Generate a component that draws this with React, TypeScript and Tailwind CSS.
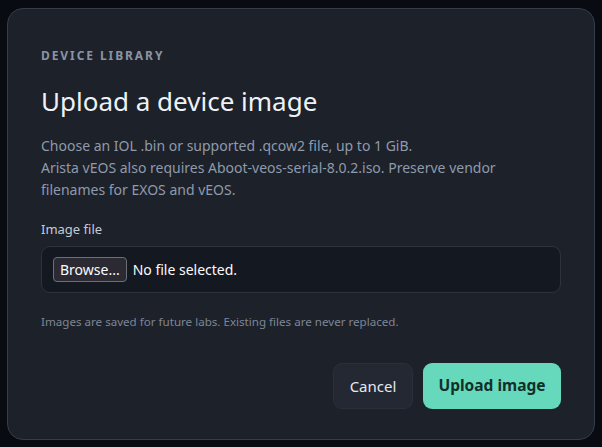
export default function App() {
  return (
    <div
      className="min-h-[447px] w-full bg-[#080b11] p-[7px] pt-[8px]"
      style={{ fontFamily: '"Noto Sans", "Open Sans", sans-serif' }}
    >
      <div className="flex h-[432px] w-[588px] flex-col rounded-[16px] border border-[#363c49] bg-[#1d212a] px-[33px] pt-[39px]">
        <p className="text-[12px] font-bold uppercase tracking-[0.16em] text-[#8b94a4] leading-[16px]">
          Device Library
        </p>
        <h2 className="mt-[20px] text-[26px] leading-[34px] text-[#eef2f7]">
          Upload a device image
        </h2>
        <p className="mt-[17px] text-[14px] leading-[22px] text-[#8f9aab]">
          Choose an IOL .bin or supported .qcow2 file, up to 1 GiB.
          <br />
          Arista vEOS also requires Aboot-veos-serial-8.0.2.iso. Preserve vendor filenames for EXOS and vEOS.
        </p>

        <label className="mt-[19px] block text-[13px] leading-[18px] text-[#c5cbd5]">Image file</label>
        <div className="mt-[8px] flex h-[47px] items-center gap-[6px] rounded-[9px] border border-[#2d333e] bg-[#141820] px-[11px]">
          <span className="rounded-[4px] border border-[#6b6f78] bg-[#2b2a33] px-[6px] text-[14px] leading-[23px] text-[#fbfbfe]">
            Browse...
          </span>
          <span className="text-[14px] text-[#fbfbfe]">No file selected.</span>
        </div>

        <p className="mt-[21px] text-[11.6px] leading-[16px] text-[#7d8696]">
          Images are saved for future labs. Existing files are never replaced.
        </p>

        <div className="mt-[33px] flex justify-end gap-[10px]">
          <button className="h-[46px] w-[80px] rounded-[9px] border border-[#2a2f39] bg-[#232832] text-[15px] text-[#e5e9f0]">
            Cancel
          </button>
          <button className="h-[46px] w-[138px] rounded-[9px] bg-[#66d9bc] text-[15.5px] font-bold text-[#12302a]">
            Upload image
          </button>
        </div>
      </div>
    </div>
  );
}
